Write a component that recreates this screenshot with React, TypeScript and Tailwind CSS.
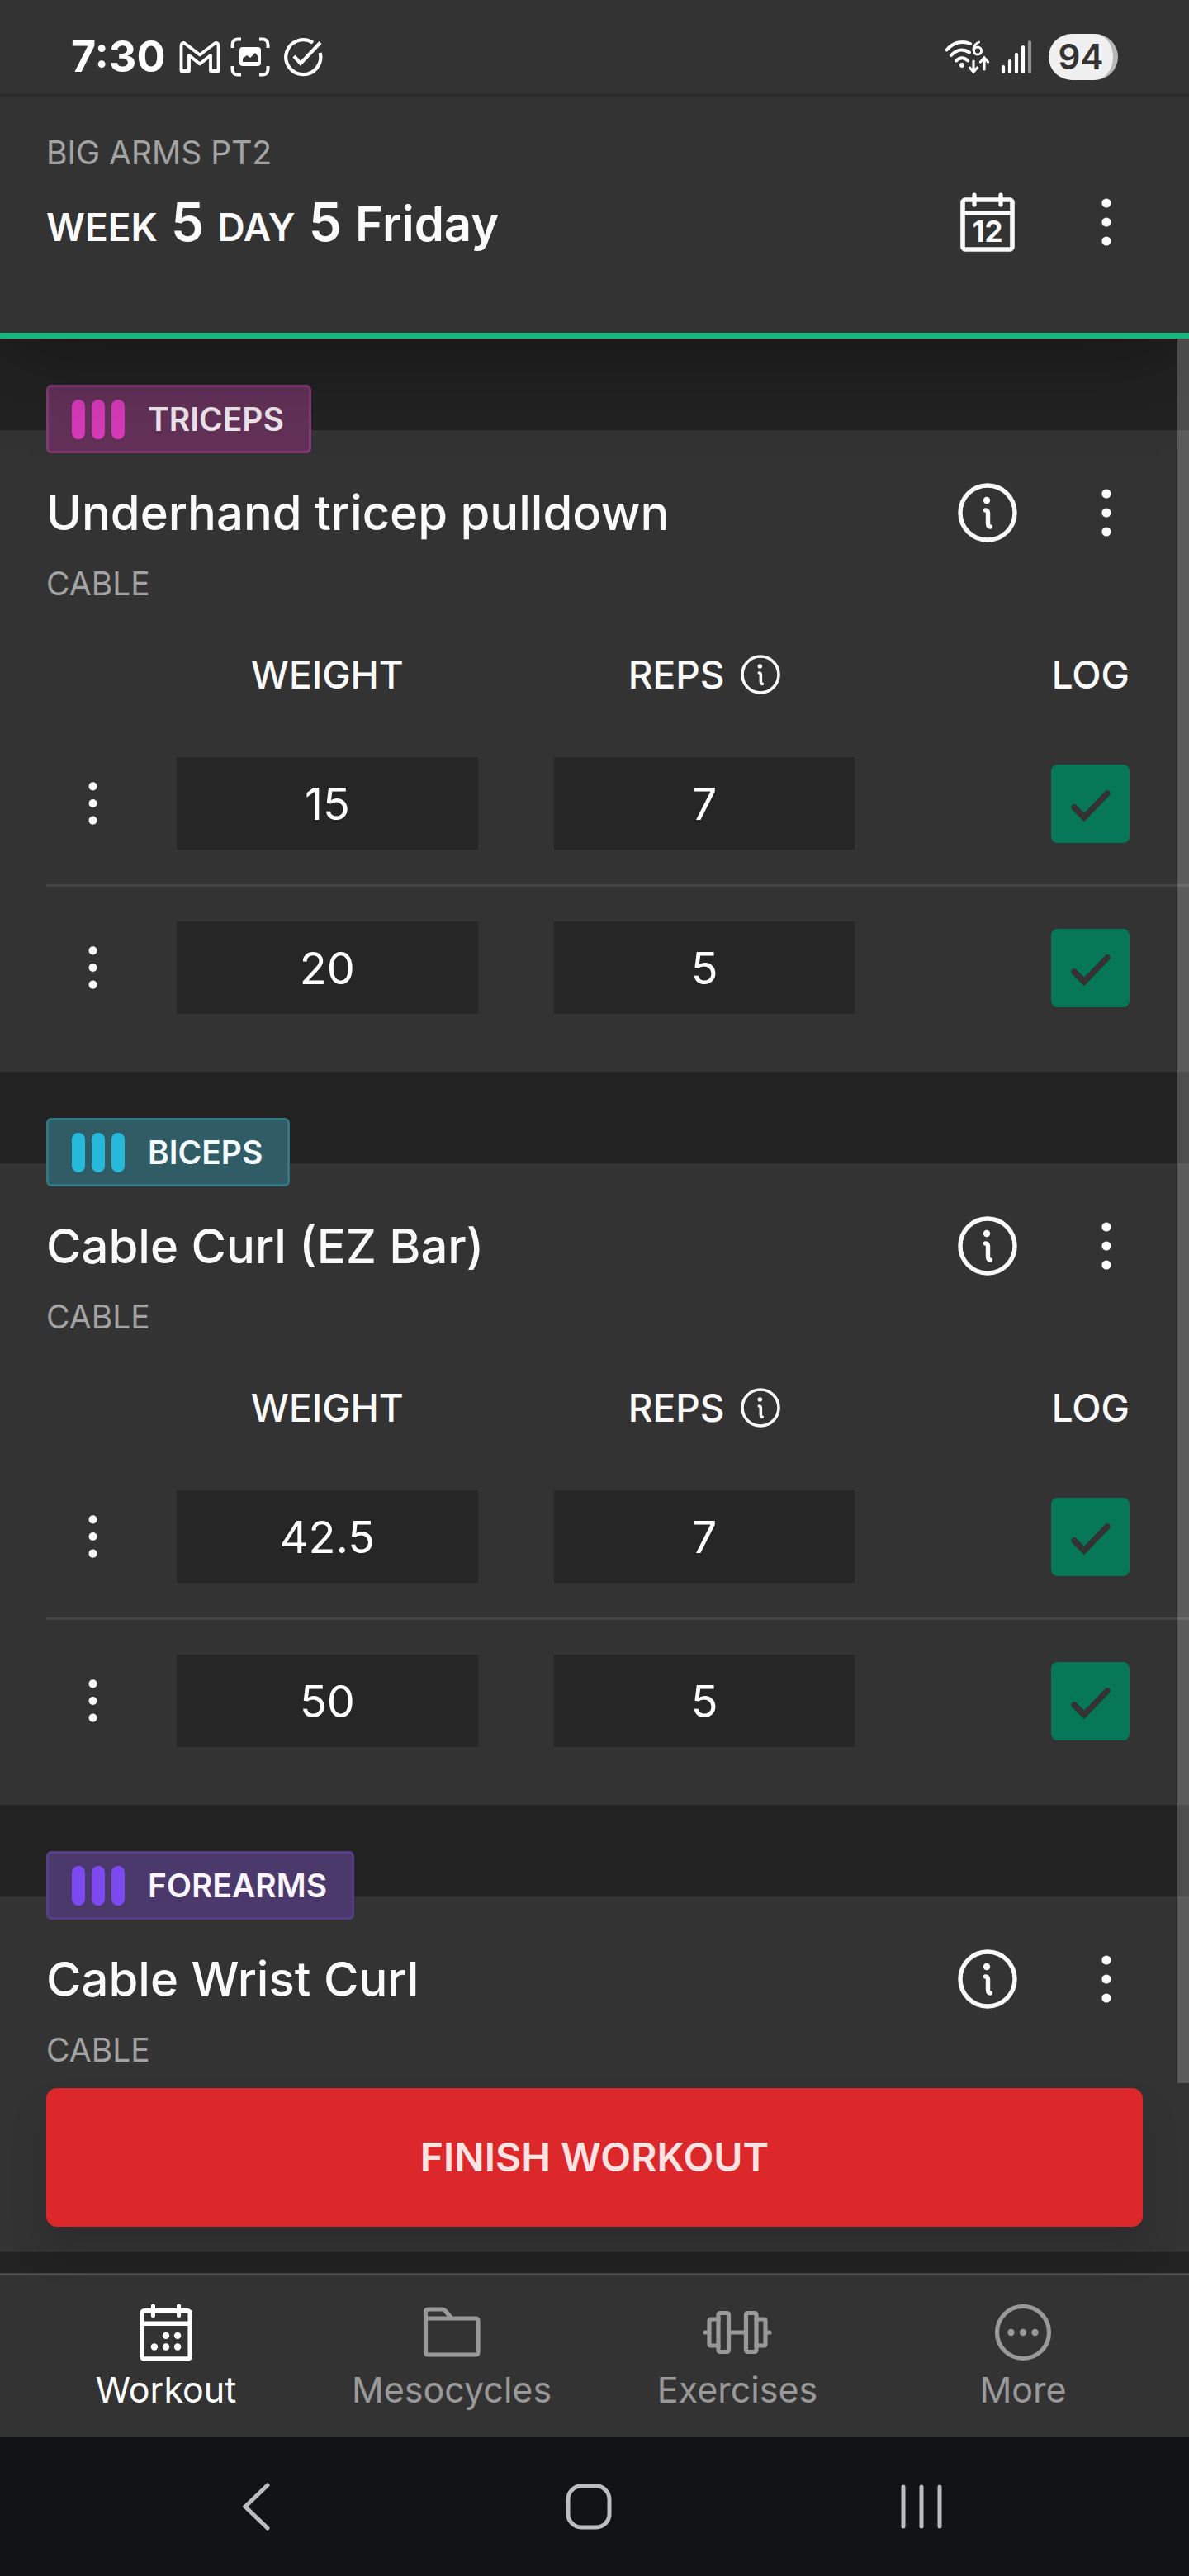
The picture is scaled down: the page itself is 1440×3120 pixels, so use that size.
import { ReactNode, useState } from "react";

interface WorkoutSet {
  weight: string;
  reps: string;
}

interface Exercise {
  id: string;
  group: string;
  name: string;
  equipment: string;
  badgeClass: string;
  barClass: string;
  labelClass: string;
  sets: WorkoutSet[];
}

const exercises: Exercise[] = [
  {
    id: "triceps",
    group: "TRICEPS",
    name: "Underhand tricep pulldown",
    equipment: "CABLE",
    badgeClass: "bg-[#633158] border-[#823b76]",
    barClass: "bg-[#d63ab8]",
    labelClass: "text-[#eee4ec]",
    sets: [
      { weight: "15", reps: "7" },
      { weight: "20", reps: "5" },
    ],
  },
  {
    id: "biceps",
    group: "BICEPS",
    name: "Cable Curl (EZ Bar)",
    equipment: "CABLE",
    badgeClass: "bg-[#305c66] border-[#327883]",
    barClass: "bg-[#26b9da]",
    labelClass: "text-[#f4fbff]",
    sets: [
      { weight: "42.5", reps: "7" },
      { weight: "50", reps: "5" },
    ],
  },
  {
    id: "forearms",
    group: "FOREARMS",
    name: "Cable Wrist Curl",
    equipment: "CABLE",
    badgeClass: "bg-[#4b396b] border-[#553f87]",
    barClass: "bg-[#7c4af0]",
    labelClass: "text-[#faf5ff]",
    sets: [],
  },
];

function KebabIcon({ className }: { className?: string }) {
  return (
    <svg viewBox="0 0 12 58" fill="currentColor" className={className} aria-hidden="true">
      <circle cx="6" cy="6" r="5.6" />
      <circle cx="6" cy="29" r="5.6" />
      <circle cx="6" cy="52" r="5.6" />
    </svg>
  );
}

function InfoIcon({ className }: { className?: string }) {
  return (
    <svg viewBox="0 0 72 72" fill="none" className={className} aria-hidden="true">
      <circle cx="36" cy="36" r="33" stroke="currentColor" strokeWidth="5.4" />
      <circle cx="35" cy="21" r="4.2" fill="currentColor" />
      <path
        d="M33.5 33c2.4 0 3 1.5 3 4v11.5c0 3 .8 4.500 3 4.500"
        stroke="currentColor"
        strokeWidth="5.4"
        strokeLinecap="round"
      />
    </svg>
  );
}

function CalendarFrame() {
  return (
    <g stroke="currentColor" fill="none" strokeLinecap="round">
      <rect x="6" y="9" width="60" height="60" rx="3" strokeWidth="5.6" />
      <path d="M6 25h60" strokeWidth="5.6" strokeLinecap="butt" />
      <path d="M20 3v12M52 3v12" strokeWidth="5.2" />
    </g>
  );
}

function StatusBar() {
  return (
    <div className="flex h-[117px] items-center border-b-4 border-[#2a2b2d] px-[86px] pt-6 text-white">
      <span className="text-[52px] leading-none font-bold">7:30</span>
      <div className="ml-4 flex items-center gap-3">
        <svg viewBox="0 0 50 40" className="h-10 w-[50px]" fill="none" stroke="currentColor" strokeWidth="3.8" strokeLinejoin="round" aria-hidden="true">
          <path d="M2.5 37V6.5c0-3.500 2.500-4.500 5-2.500L25 17.500 42.500 4c2.500-2 5-1 5 2.500V37H38V18L25 28.500 12 18v19z" />
        </svg>
        <svg viewBox="0 0 48 48" className="size-12" fill="none" aria-hidden="true">
          <path
            d="M2.5 13V9c0-4 2.500-6.500 6.500-6.500h4M35 2.500h4c4 0 6.500 2.500 6.500 6.500v4M45.500 35v4c0 4-2.500 6.500-6.500 6.500h-4M13 45.500H9c-4 0-6.500-2.500-6.500-6.500v-4"
            stroke="currentColor"
            strokeWidth="4"
          />
          <rect x="11" y="12" width="26" height="23" rx="4" fill="currentColor" />
          <path d="M15 30v-4l5-4 4 3 6-6 4 5v6z" fill="#333333" />
        </svg>
        <svg viewBox="0 0 48 48" className="ml-1 size-12" fill="none" stroke="currentColor" strokeWidth="4.2" aria-hidden="true">
          <path d="M36 6.800A21 21 0 1 0 44.600 19" />
          <path d="M13 23l8 9L45 6.500" />
        </svg>
      </div>
      <div className="ml-auto flex items-center gap-3">
        <svg viewBox="0 0 56 42" className="h-[42px] w-14" fill="none" stroke="currentColor" strokeWidth="4" strokeLinecap="round" aria-hidden="true">
          <path d="M2.5 12.500C11 2.500 22 1 31 5" />
          <path d="M8 19c7-7.500 15-8 22-3.500" />
          <path d="M14 25.500c4.500-4.500 10-4.500 14 0" />
          <circle cx="21" cy="31" r="3" fill="currentColor" stroke="none" />
          <path d="M41.500 3c-4 2-6.500 5.500-6.500 10" strokeWidth="3" />
          <circle cx="40" cy="13.5" r="4.6" strokeWidth="3" />
          <path d="M35 26v12M30.500 34l4.500 5 4.500-5M48 36V23M43.500 27l4.500-5 4.500 5" strokeWidth="3.2" />
        </svg>
        <svg viewBox="0 0 38 42" className="h-[42px] w-[38px]" fill="none" stroke="currentColor" strokeWidth="4.2" strokeLinecap="round" aria-hidden="true">
          <path d="M3 33v6M11 26v13M19 18v21M27 9v30" />
          <path d="M35 3v36" opacity="0.45" />
        </svg>
        <span className="ml-2 flex h-14 w-[84px] items-center justify-center rounded-full border-r-[6px] border-[#b8b8b8] bg-[#f0f0f0] text-[42px] leading-none font-semibold text-[#333333]">
          94
        </span>
      </div>
    </div>
  );
}

function Header() {
  return (
    <header className="relative z-10 border-b-[7px] border-[#19b57f] bg-[#333333] shadow-[0_20px_100px_rgba(0,0,0,0.35)]">
      <StatusBar />
      <div className="px-14 pt-[38px] pb-[86px]">
        <p className="text-[39px] leading-[60px] text-[#a3a3a3]">BIG ARMS PT2</p>
        <div className="mt-1.5 flex h-24 items-center justify-between">
          <h1 className="text-[64px] leading-none font-semibold text-[#fafafa]">
            <span className="text-[46px]">WEEK</span> 5 <span className="text-[46px]">DAY</span> 5{" "}
            <span className="text-[58px]">Friday</span>
          </h1>
          <div className="flex gap-14 text-[#fafafa]">
            <button type="button" aria-label="Open calendar" className="flex h-24 w-22 items-center justify-center">
              <svg viewBox="0 0 72 72" className="size-[72px]" aria-hidden="true">
                <CalendarFrame />
                <text x="36" y="60" textAnchor="middle" fontSize="35" fontWeight="700" fill="currentColor">
                  12
                </text>
              </svg>
            </button>
            <button type="button" aria-label="Workout options" className="flex h-24 w-22 items-center justify-center">
              <KebabIcon className="h-[58px] w-3" />
            </button>
          </div>
        </div>
      </div>
    </header>
  );
}

function SetRow({ exercise, set, index, last }: { exercise: string; set: WorkoutSet; index: number; last: boolean }) {
  const [weight, setWeight] = useState(set.weight);
  const [reps, setReps] = useState(set.reps);
  const [done, setDone] = useState(true);
  const cell = last ? "py-[42px]" : "border-b-[3px] border-[#464646] py-[42px]";
  const field = "block h-28 w-full bg-[#262626] text-center text-[54px] text-white outline-none";
  const label = `${exercise} set ${index + 1}`;

  return (
    <tr>
      <td className={cell}>
        <button type="button" aria-label={`${label} options`} className="mx-auto flex h-20 w-16 items-center justify-center">
          <KebabIcon className="h-[52px] w-[11px]" />
        </button>
      </td>
      <td className={`${cell} px-[46px]`}>
        <input aria-label={`${label} weight`} inputMode="decimal" value={weight} onChange={(e) => setWeight(e.target.value)} className={field} />
      </td>
      <td className={`${cell} px-[46px]`}>
        <input aria-label={`${label} reps`} inputMode="numeric" value={reps} onChange={(e) => setReps(e.target.value)} className={field} />
      </td>
      <td className={`${cell} pr-[72px]`}>
        <label className="ml-auto grid size-[95px]">
          <input
            type="checkbox"
            aria-label={`Log ${label}`}
            checked={done}
            onChange={(e) => setDone(e.target.checked)}
            className="col-start-1 row-start-1 size-full appearance-none rounded-lg bg-[#525252] checked:bg-[#067857]"
          />
          {done && (
            <svg viewBox="0 0 95 95" fill="none" className="pointer-events-none col-start-1 row-start-1" aria-hidden="true">
              <path d="M28 52l12 12 28-29" stroke="#333333" strokeWidth="7.5" strokeLinecap="round" />
            </svg>
          )}
        </label>
      </td>
    </tr>
  );
}

function ExerciseCard({ exercise }: { exercise: Exercise }) {
  return (
    <section className="mt-[111px] flex flex-col bg-[#333333]">
      <div className={`-mt-[55px] ml-14 flex h-[83px] items-center self-start rounded-md border-[3px] pr-[30px] pl-7 ${exercise.badgeClass}`}>
        <div className="flex gap-2">
          <span className={`h-12 w-4 rounded-full ${exercise.barClass}`} />
          <span className={`h-12 w-4 rounded-full ${exercise.barClass}`} />
          <span className={`h-12 w-4 rounded-full ${exercise.barClass}`} />
        </div>
        <span className={`ml-7 text-[39px] leading-none font-semibold ${exercise.labelClass}`}>{exercise.group}</span>
      </div>

      <div className="mt-6 flex h-24 items-center justify-between px-14 text-[#fafafa]">
        <h2 className="text-[58px] leading-none font-medium">{exercise.name}</h2>
        <div className="flex gap-14">
          <button type="button" aria-label={`About ${exercise.name}`} className="flex h-24 w-22 items-center justify-center">
            <InfoIcon className="size-[72px]" />
          </button>
          <button type="button" aria-label={`${exercise.name} options`} className="flex h-24 w-22 items-center justify-center">
            <KebabIcon className="h-[58px] w-3" />
          </button>
        </div>
      </div>
      <p className="mt-2 px-14 text-[39px] leading-[60px] text-[#a3a3a3]">{exercise.equipment}</p>

      {exercise.sets.length > 0 ? (
        <div className="mt-[22px] pb-7 pl-14 text-[#fafafa]">
          <table className="w-full table-fixed border-separate border-spacing-0">
            <thead>
              <tr className="h-[116px] text-[46px] leading-none">
                <td className="w-28 p-0" />
                <th className="w-[33%] p-0 font-medium">WEIGHT</th>
                <th className="w-[33%] p-0 font-medium">
                  <div className="flex items-center justify-center gap-5">
                    REPS
                    <button type="button" aria-label="About reps">
                      <InfoIcon className="size-12" />
                    </button>
                  </div>
                </th>
                <th className="py-0 pr-[72px] pl-0 text-right font-medium">LOG</th>
              </tr>
            </thead>
            <tbody>
              {exercise.sets.map((set, i) => (
                <SetRow key={i} exercise={exercise.name} set={set} index={i} last={i === exercise.sets.length - 1} />
              ))}
            </tbody>
          </table>
        </div>
      ) : (
        <div className="h-[214px]" />
      )}
    </section>
  );
}

function NavItem({ label, active, children }: { label: string; active?: boolean; children: ReactNode }) {
  return (
    <a
      href={`#${label.toLowerCase()}`}
      aria-current={active ? "page" : undefined}
      className={`flex flex-col items-center ${active ? "text-white" : "text-[#999999]"}`}
    >
      {children}
      <span className="mt-1 text-[43px] leading-[60px]">{label}</span>
    </a>
  );
}

function BottomNav() {
  return (
    <nav className="grid h-[199px] grid-cols-4 border-t-[3px] border-[#4a4a4a] bg-[#333333] px-7 pt-[34px]">
      <NavItem label="Workout" active>
        <svg viewBox="0 0 72 72" className="size-[70px]" aria-hidden="true">
          <CalendarFrame />
          <g fill="currentColor">
            <circle cx="36" cy="40" r="4.3" />
            <circle cx="50.5" cy="40" r="4.3" />
            <circle cx="21.5" cy="54" r="4.3" />
            <circle cx="36" cy="54" r="4.3" />
            <circle cx="50.5" cy="54" r="4.3" />
          </g>
        </svg>
      </NavItem>
      <NavItem label="Mesocycles">
        <svg viewBox="0 0 70 70" className="size-[70px]" fill="none" stroke="currentColor" strokeWidth="5.2" strokeLinejoin="round" aria-hidden="true">
          <path d="M3.5 21V10c0-2 1-3 3-3h17c1.500 0 2.500.5 3.500 1.500L35 18h29c2 0 3 1 3 3v38c0 2-1 3-3 3H6.500c-2 0-3-1-3-3V18H35" />
        </svg>
      </NavItem>
      <NavItem label="Exercises">
        <svg viewBox="0 0 84 70" className="h-[70px] w-[84px]" fill="none" stroke="currentColor" strokeWidth="5.2" strokeLinecap="round" strokeLinejoin="round" aria-hidden="true">
          <rect x="19" y="11.5" width="12.5" height="47" rx="2" />
          <rect x="52.5" y="11.5" width="12.5" height="47" rx="2" />
          <path d="M19 19h-9c-1.500 0-2 .5-2 2v28c0 1.500.5 2 2 2h9M65 19h9c1.500 0 2 .5 2 2v28c0 1.500-.5 2-2 2h-9M31.500 35h21M3 35h5M76 35h5" />
        </svg>
      </NavItem>
      <NavItem label="More">
        <svg viewBox="0 0 70 70" className="size-[70px]" fill="none" aria-hidden="true">
          <circle cx="35" cy="35" r="31.5" stroke="currentColor" strokeWidth="5.2" />
          <g fill="currentColor">
            <circle cx="20.5" cy="35" r="4.2" />
            <circle cx="35" cy="35" r="4.2" />
            <circle cx="49.5" cy="35" r="4.2" />
          </g>
        </svg>
      </NavItem>
    </nav>
  );
}

function SystemNav() {
  return (
    <div className="grid h-[168px] grid-cols-3 items-center justify-items-center bg-[#121317] pr-[123px] pl-[109px] text-[#bdbdbf]">
      <button type="button" aria-label="Back">
        <svg viewBox="0 0 34 58" className="h-[58px] w-[34px]" fill="none" stroke="currentColor" strokeWidth="5" strokeLinecap="round" aria-hidden="true">
          <path d="M31 3L4 29l27 26" />
        </svg>
      </button>
      <button type="button" aria-label="Home">
        <svg viewBox="0 0 56 56" className="size-14" fill="none" stroke="currentColor" strokeWidth="5" aria-hidden="true">
          <rect x="3" y="3" width="50" height="50" rx="16" />
        </svg>
      </button>
      <button type="button" aria-label="Recent apps">
        <svg viewBox="0 0 52 56" className="h-14 w-[52px]" fill="none" stroke="currentColor" strokeWidth="5" strokeLinecap="round" aria-hidden="true">
          <path d="M4 4v48M26 4v48M48 4v48" />
        </svg>
      </button>
    </div>
  );
}

export default function App() {
  return (
    <div className="flex min-h-screen flex-col bg-[#222222] font-['Inter','Liberation_Sans',sans-serif]">
      <Header />
      <main className="relative flex-1 pb-[26px]">
        {exercises.map((exercise) => (
          <ExerciseCard key={exercise.id} exercise={exercise} />
        ))}
        <div className="absolute top-0 right-0 z-20 h-[2113px] w-3.5 bg-white/20" />
        <div className="absolute inset-x-14 bottom-14">
          <button
            type="button"
            className="h-[168px] w-full rounded-[13px] bg-[#dc282a] text-[48px] font-semibold text-[#ffe2e2] shadow-[0_30px_45px_rgba(0,0,0,0.15)]"
          >
            FINISH WORKOUT
          </button>
        </div>
      </main>
      <BottomNav />
      <SystemNav />
    </div>
  );
}
